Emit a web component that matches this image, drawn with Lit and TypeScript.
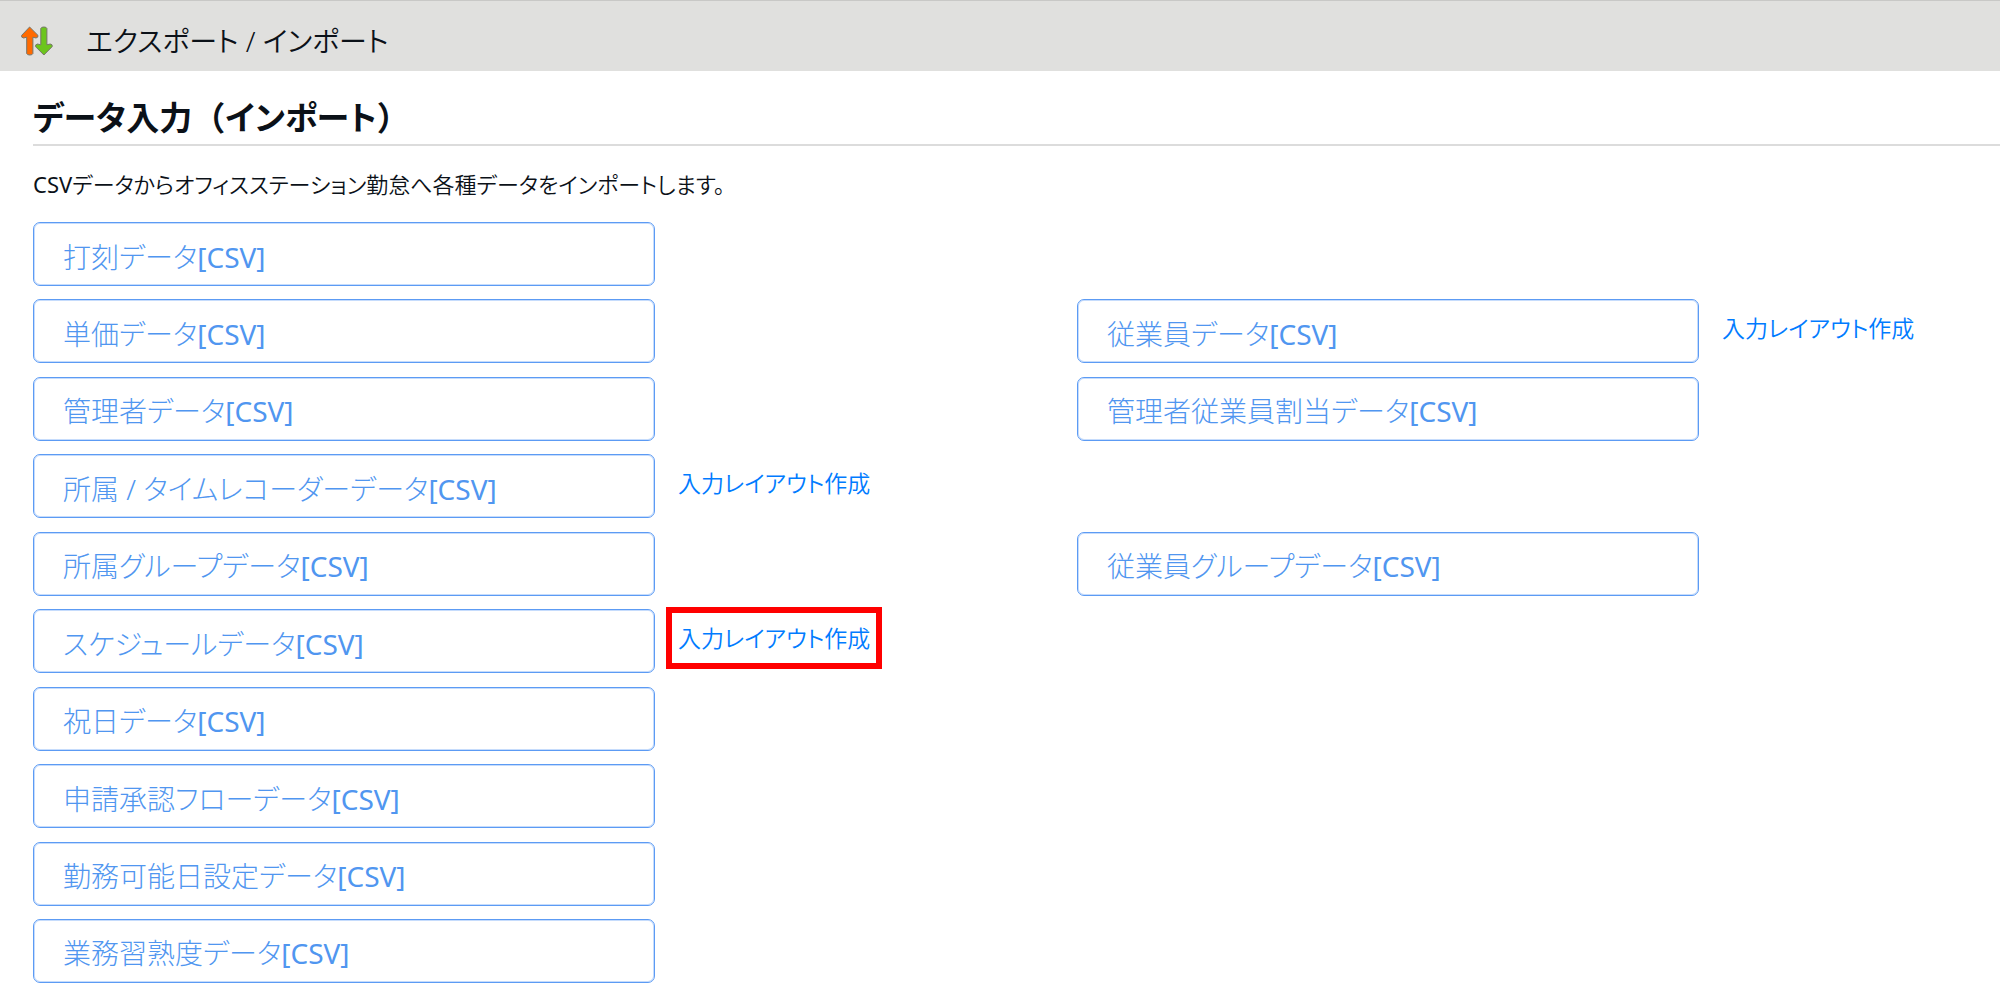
import { LitElement, html, css, nothing } from "lit";
import { customElement, property } from "lit/decorators.js";

interface Entry {
  label: string;
  layout?: boolean;
  marked?: boolean;
}

const rows: [Entry, Entry?][] = [
  [{ label: "打刻データ" }],
  [{ label: "単価データ" }, { label: "従業員データ", layout: true }],
  [{ label: "管理者データ" }, { label: "管理者従業員割当データ" }],
  [{ label: "所属 / タイムレコーダーデータ", layout: true }],
  [{ label: "所属グループデータ" }, { label: "従業員グループデータ" }],
  [{ label: "スケジュールデータ", layout: true, marked: true }],
  [{ label: "祝日データ" }],
  [{ label: "申請承認フローデータ" }],
  [{ label: "勤務可能日設定データ" }],
  [{ label: "業務習熟度データ" }],
];

@customElement("import-entry")
export class ImportEntry extends LitElement {
  @property({ attribute: false }) entry!: Entry;

  static styles = css`
    :host {
      display: flex;
      gap: 23px;
      min-width: 0;
    }
    .import {
      box-sizing: border-box;
      flex: 0 1 622px;
      min-height: 64px;
      padding: 5px 28px 0 29px;
      border: 1px solid #5c9bf4;
      border-radius: 7px;
      box-shadow: inset 0 0 0 1px #c6dcfc;
      background: #fff;
      color: #5096f0;
      font: inherit;
      font-size: 28px;
      line-height: 40px;
      text-align: left;
      cursor: pointer;
    }
    .format {
      font-weight: 400;
    }
    .layout {
      position: relative;
      align-self: center;
      margin-bottom: 6px;
      color: #007bff;
      font-size: 23px;
      font-weight: 350;
      line-height: 32px;
      text-decoration: none;
      white-space: nowrap;
    }
    .layout:hover {
      text-decoration: underline;
    }
    .marked::after {
      content: "";
      position: absolute;
      inset: -15px -12px;
      border: 6px solid #f00;
      pointer-events: none;
    }
  `;

  render() {
    const { label, layout, marked } = this.entry;
    return html`
      <button class="import" type="button">${label}<span class="format">[CSV]</span></button>
      ${layout
        ? html`<a class="layout ${marked ? "marked" : ""}" href="#layout">入力レイアウト作成</a>`
        : nothing}
    `;
  }
}

@customElement("app-root")
export class AppRoot extends LitElement {
  static styles = css`
    :host {
      box-sizing: border-box;
      display: flex;
      flex-direction: column;
      min-height: 100vh;
      background: #fff;
      color: #0b1118;
      font-family: "Noto Sans", "Noto Sans CJK JP", sans-serif;
      font-weight: 300;
      font-feature-settings: "palt";
    }
    .bar {
      display: flex;
      align-items: center;
      gap: 32px;
      padding: 20px 20px 10px;
      border-top: 1px solid #c8c8c6;
      background: #e0e0de;
    }
    .icon {
      width: 34px;
      height: 30px;
    }
    .title {
      margin: 0;
      font-size: 28px;
      font-weight: 350;
      line-height: 40px;
    }
    .content {
      flex: 1;
      display: flex;
      flex-direction: column;
      padding: 24px 0 11px 33px;
    }
    .heading {
      margin: 0 0 20px;
      padding-bottom: 3px;
      border-bottom: 2px solid #dcdcdc;
      font-size: 33px;
      font-weight: 700;
      line-height: 46px;
    }
    .full {
      font-feature-settings: normal;
    }
    .lead {
      margin: 0 0 20px;
      font-size: 22px;
      font-weight: 350;
      line-height: 36px;
    }
    .format {
      font-weight: 400;
    }
    .list {
      flex: 1;
      display: grid;
      grid-template-columns: minmax(0, 1044px) minmax(0, 1fr);
      align-content: space-between;
      row-gap: 12px;
    }
    .first {
      grid-column: 1;
    }
    .second {
      grid-column: 2;
    }
  `;

  render() {
    return html`
      <header class="bar">
        <svg class="icon" viewBox="0 0 34 30" aria-hidden="true">
          <g stroke="#77766a" stroke-width="1" stroke-linejoin="round">
            <path fill="#ff6a00" d="M9.6 1 L18 9.4 Q18.4 11.6 16 12 L12.9 11.2 V27.6 Q12.4 29 9.8 29 Q7.2 29 6.7 27.6 V11.2 L3.6 12 Q1 11.6 1.6 9.4 Z" />
            <path fill="#6cc51d" d="M23.9 29 L15.5 20.6 Q15.1 18.4 17.5 18 L20.8 18.8 V2.4 Q21.3 1 23.9 1 Q26.4 1 26.9 2.4 V18.8 L30.2 18 Q32.8 18.4 32.2 20.6 Z" />
          </g>
        </svg>
        <h1 class="title">エクスポート / インポート</h1>
      </header>
      <main class="content">
        <h2 class="heading">データ入力<span class="full">（</span>インポート<span class="full">）</span></h2>
        <p class="lead"><span class="format">CSV</span>データからオフィスステーション勤怠へ各種データをインポートします。</p>
        <div class="list">
          ${rows.map(
            ([first, second]) => html`
              <import-entry class="first" .entry=${first}></import-entry>
              ${second
                ? html`<import-entry class="second" .entry=${second}></import-entry>`
                : nothing}
            `,
          )}
        </div>
      </main>
    `;
  }
}
